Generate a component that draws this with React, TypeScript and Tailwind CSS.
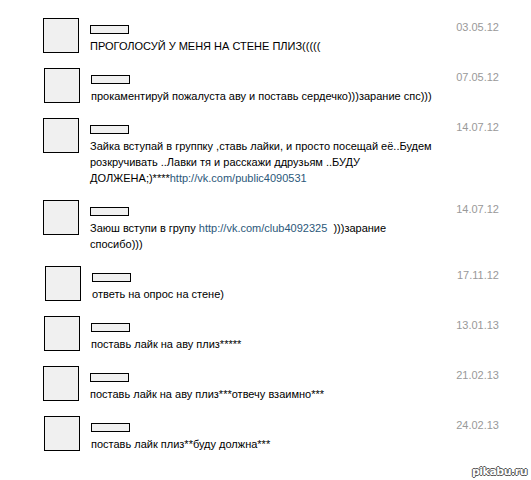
import React from 'react';

type Part = string | { href: string };

interface Message {
  date: string;
  lines: Part[][];
  shift?: string;
}

const messages: Message[] = [
  { date: '03.05.12', lines: [['ПРОГОЛОСУЙ У МЕНЯ НА СТЕНЕ ПЛИЗ(((((']] },
  {
    date: '07.05.12',
    shift: 'ml-px',
    lines: [['прокаментируй пожалуста аву и поставь сердечко)))зарание спс)))']],
  },
  {
    date: '14.07.12',
    lines: [
      ['Зайка вступай в группку ,ставь лайки, и просто посещай её..Будем'],
      ['розкручивать ..Лавки тя и расскажи ддрузьям ..БУДУ'],
      ['ДОЛЖЕНА;)****', { href: 'http://vk.com/public4090531' }],
    ],
  },
  {
    date: '14.07.12',
    lines: [
      ['Заюш вступи в групу ', { href: 'http://vk.com/club4092325' }, '  )))зарание'],
      ['спосибо)))'],
    ],
  },
  { date: '17.11.12', shift: 'ml-[2px]', lines: [['ответь на опрос на стене)']] },
  { date: '13.01.13', shift: 'ml-px', lines: [['поставь лайк на аву плиз*****']] },
  { date: '21.02.13', lines: [['поставь лайк на аву плиз***отвечу взаимно***']] },
  { date: '24.02.13', shift: 'ml-px', lines: [['поставь лайк плиз**буду должна***']] },
];

const Row: React.FC<{ msg: Message }> = ({ msg }) => (
  <div className={`flex ${msg.shift ?? ''}`}>
    <div className="w-[36px] h-[35px] shrink-0 border border-black bg-[#f0f0f0]" />
    <div className="flex-1 ml-[11px] pt-[1px] pb-[14px]">
      <div className="flex justify-between items-start h-[19px]">
        <div className="mt-[6px] w-[39px] h-[9px] border border-black bg-[#f0f0f0]" />
        <span className="leading-[16px] text-[#999999]">{msg.date}</span>
      </div>
      <div className="leading-[16px] text-black whitespace-pre">
        {msg.lines.map((line, i) => (
          <div key={i}>
            {line.map((part, j) =>
              typeof part === 'string' ? (
                <span key={j}>{part}</span>
              ) : (
                <a key={j} href={part.href} className="text-[#2b587a]">
                  {part.href}
                </a>
              ),
            )}
          </div>
        ))}
      </div>
    </div>
  </div>
);

export default function App() {
  return (
    <div className="w-[531px] h-[480px] bg-white flex flex-col font-['Liberation_Sans',Arial,sans-serif] text-[11px]">
      <div className="pl-[43px] pr-[32px] pt-[18px]">
        {messages.map((m, i) => (
          <Row key={i} msg={m} />
        ))}
      </div>
      <div className="flex justify-end pr-[4px] mt-auto pb-[3px]">
        <span className="font-['DejaVu_Sans',sans-serif] font-bold text-[11px] leading-[12px] text-white tracking-[-0.5px] [text-shadow:1px_0_0_#555,-1px_0_0_#555,0_1px_0_#555,0_-1px_0_#555]">
          pikabu.ru
        </span>
      </div>
    </div>
  );
}
